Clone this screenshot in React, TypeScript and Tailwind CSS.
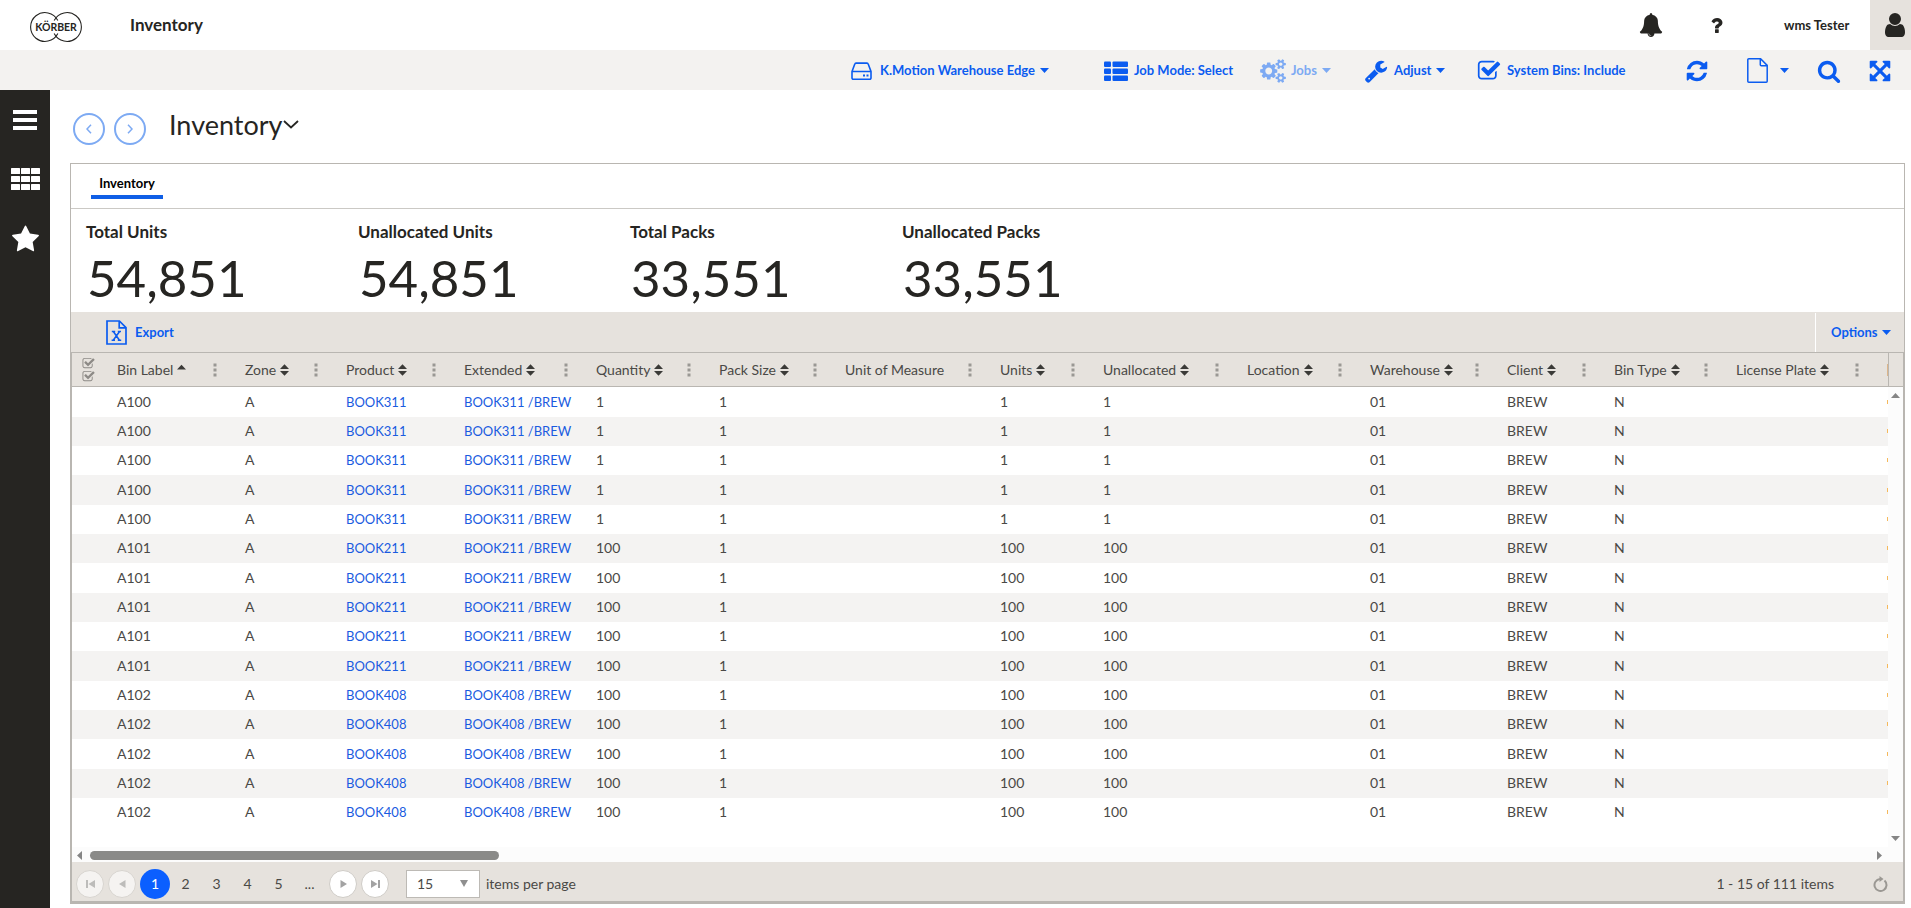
import React from "react";

type IconProps = { d: string; className?: string; box?: string };

function Icon({ d, className = "", box = "0 0 1792 1792" }: IconProps) {
  return (
    <svg viewBox={box} className={className} fill="currentColor" aria-hidden="true">
      <path d={d} />
    </svg>
  );
}

const PATHS = {
  bell: "M912 1696q0-16-16-16-59 0-101.5-42.5t-42.5-101.5q0-16-16-16t-16 16q0 73 51.5 124.5t124.5 51.5q16 0 16-16zm816-288q0 52-38 90t-90 38h-448q0 106-75 181t-181 75-181-75-75-181h-448q-52 0-90-38t-38-90q50-42 91-88t85-119.5 74.5-158.5 50-206 19.5-260q0-152 117-282.5t307-158.5q-8-19-8-39 0-40 28-68t68-28 68 28 28 68q0 20-8 39 190 28 307 158.5t117 282.5q0 139 19.5 260t50 206 74.5 158.5 85 119.5 91 88z",
  question:
    "M1088 1256v240q0 16-12 28t-28 12h-240q-16 0-28-12t-12-28v-240q0-16 12-28t28-12h240q16 0 28 12t12 28zm316-600q0 54-15.5 101t-35 76.5-55 59.5-57.5 43.5-61 35.5q-41 23-68.5 65t-27.5 67q0 17-12 32.5t-28 15.5h-240q-15 0-25.5-18.5t-10.5-37.5v-45q0-83 65-156.5t143-108.5q59-27 84-56t25-76q0-42-46.5-74t-107.5-32q-65 0-108 29-35 25-107 115-13 16-31 16-12 0-25-8l-164-125q-13-10-15.5-25t5.5-28q160-266 464-266 80 0 161 31t146 83 106 127.5 41 158.5z",
  user: "M1536 1399q0 109-62.5 187t-150.5 78h-854q-88 0-150.5-78t-62.5-187q0-85 8.5-160.5t31.5-152 58.5-131 94-89 134.5-34.5q131 128 313 128t313-128q76 0 134.5 34.5t94 89 58.5 131 31.5 152 8.5 160.5zm-256-887q0 159-112.5 271.5t-271.5 112.5-271.5-112.5-112.5-271.5 112.5-271.5 271.5-112.5 271.5 112.5 112.5 271.5z",
  refresh:
    "M1639 1056q0 5-1 7-64 268-268 434.5t-478 166.5q-146 0-282.5-55t-243.5-157l-129 129q-19 19-45 19t-45-19-19-45v-448q0-26 19-45t45-19h448q26 0 45 19t19 45-19 45l-137 137q71 66 161 102t187 36q134 0 250-65t186-179q11-17 53-117 8-23 30-23h192q13 0 22.5 9.5t9.5 22.5zm25-800v448q0 26-19 45t-45 19h-448q-26 0-45-19t-19-45 19-45l138-138q-148-137-349-137-134 0-250 65t-186 179q-11 17-53 117-8 23-30 23h-199q-13 0-22.5-9.5t-9.5-22.5v-7q65-268 270-434.5t480-166.5q146 0 284 55.5t245 156.5l130-129q19-19 45-19t45 19 19 45z",
  check:
    "M1472 930v318q0 119-84.5 203.5t-203.5 84.5h-832q-119 0-203.5-84.5t-84.5-203.5v-832q0-119 84.5-203.5t203.5-84.5h832q63 0 117 25 15 7 18 23 3 17-9 29l-49 49q-10 10-23 10-3 0-9-2-23-6-45-6h-832q-66 0-113 47t-47 113v832q0 66 47 113t113 47h832q66 0 113-47t47-113v-254q0-13 9-22l64-64q10-10 23-10 6 0 12 3 20 8 20 29zm231-489l-814 814q-24 24-57 24t-57-24l-430-430q-24-24-24-57t24-57l110-110q24-24 57-24t57 24l263 263 647-647q24-24 57-24t57 24l110 110q24 24 24 57t-24 57z",
  cogs: "M896 896q0-106-75-181t-181-75-181 75-75 181 75 181 181 75 181-75 75-181zm768 512q0-52-38-90t-90-38-90 38-38 90q0 53 37.5 90.5t90.5 37.5 90.5-37.5 37.5-90.5zm0-1024q0-52-38-90t-90-38-90 38-38 90q0 53 37.5 90.5t90.5 37.5 90.5-37.5 37.5-90.5zm-384 421v185q0 10-7 19.5t-16 10.5l-155 24q-11 35-32 76 34 48 90 115 7 11 7 20 0 12-7 19-23 30-82.5 89.5t-78.5 59.5q-11 0-21-7l-115-90q-37 19-77 31-11 108-23 155-7 24-30 24h-186q-11 0-20-7.5t-10-17.5l-23-153q-34-10-75-31l-118 89q-7 7-20 7-11 0-21-8-144-133-144-160 0-9 7-19 10-14 41-53t47-61q-23-44-35-82l-152-24q-10-1-17-9.5t-7-19.5v-185q0-10 7-19.5t16-10.5l155-24q11-35 32-76-34-48-90-115-7-11-7-20 0-12 7-20 22-30 82-89t79-59q11 0 21 7l115 90q34-18 77-32 11-108 23-154 7-24 30-24h186q11 0 20 7.5t10 17.5l23 153q34 10 75 31l118-89q8-7 20-7 11 0 21 8 144 133 144 160 0 8-7 19-12 16-42 54t-45 60q23 48 34 82l152 23q10 2 17 10.5t7 19.5zm640 533v140q0 16-149 31-12 27-30 52 51 113 51 138 0 4-4 7-122 71-124 71-8 0-46-47t-52-68q-20 2-30 2t-30-2q-14 21-52 68t-46 47q-2 0-124-71-4-3-4-7 0-25 51-138-18-25-30-52-149-15-149-31v-140q0-16 149-31 13-29 30-52-51-113-51-138 0-4 4-7 4-2 35-20t59-34 30-16q8 0 46 46.5t52 67.5q20-2 30-2t30 2q51-71 92-112l6-2q4 0 124 70 4 3 4 7 0 25-51 138 17 23 30 52 149 15 149 31zm0-1024v140q0 16-149 31-12 27-30 52 51 113 51 138 0 4-4 7-122 71-124 71-8 0-46-47t-52-68q-20 2-30 2t-30-2q-14 21-52 68t-46 47q-2 0-124-71-4-3-4-7 0-25 51-138-18-25-30-52-149-15-149-31v-140q0-16 149-31 13-29 30-52-51-113-51-138 0-4 4-7 4-2 35-20t59-34 30-16q8 0 46 46.5t52 67.5q20-2 30-2t30 2q51-71 92-112l6-2q4 0 124 70 4 3 4 7 0 25-51 138 17 23 30 52 149 15 149 31z",
  wrench:
    "M448 1472q0-26-19-45t-45-19-45 19-19 45 19 45 45 19 45-19 19-45zm644-420l-682 682q-37 37-90 37-52 0-91-37l-106-108q-38-36-38-90 0-53 38-91l681-681q39 98 114.5 173.5t173.5 114.5zm634-435q0 39-23 106-47 134-164.5 217.5t-258.5 83.5q-185 0-316.5-131.5t-131.5-316.5 131.5-316.5 316.5-131.5q58 0 121.5 16.5t107.5 46.5q16 11 16 28t-16 28l-293 169v224l193 107q5-3 79-48.5t135.5-81 70.5-35.5q15 0 23.5 10t8.5 25z",
  search:
    "M1216 832q0-185-131.5-316.5t-316.5-131.5-316.5 131.5-131.5 316.5 131.5 316.5 316.5 131.5 316.5-131.5 131.5-316.5zm512 832q0 52-38 90t-90 38q-54 0-90-38l-343-342q-179 124-399 124-143 0-273.5-55.5t-225-150-150-225-55.5-273.5 55.5-273.5 150-225 225-150 273.5-55.5 273.5 55.5 225 150 150 225 55.5 273.5q0 220-124 399l343 343q37 37 37 90z",
  expand:
    "M1411 541l-355 355 355 355 144-144q29-31 70-14 39 17 39 59v448q0 26-19 45t-45 19h-448q-42 0-59-40-17-39 14-69l144-144-355-355-355 355 144 144q31 30 14 69-17 40-59 40h-448q-26 0-45-19t-19-45v-448q0-42 40-59 39-17 69 14l144 144 355-355-355-355-144 144q-19 19-45 19-12 0-24-5-40-17-40-59v-448q0-26 19-45t45-19h448q42 0 59 40 17 39-14 69l-144 144 355 355 355-355-144-144q-31-30-14-69 17-40 59-40h448q26 0 45 19t19 45v448q0 42-39 59-13 5-25 5-26 0-45-19z",
  star: "M1728 647q0 22-26 48l-363 354 86 500q1 7 1 20 0 21-10.5 35.5t-30.5 14.5q-19 0-40-12l-449-236-449 236q-22 12-40 12-21 0-31.5-14.5t-10.5-35.5q0-6 2-20l86-500-364-354q-25-27-25-48 0-37 56-46l502-73 225-455q19-41 49-41t49 41l225 455 502 73q56 9 56 46z",
};

function Caret({ className = "" }: { className?: string }) {
  return (
    <svg viewBox="0 0 9 5" className={`h-[5px] w-[9px] ${className}`} fill="currentColor" aria-hidden="true">
      <path d="M0 0h9L4.5 5z" />
    </svg>
  );
}

function Logo() {
  return (
    <svg viewBox="0 0 52 30" className="h-[30px] w-[52px]" fill="none" stroke="#262522" strokeWidth="1.1" role="img" aria-label="Körber">
      <path d="M27.85 8.5A14.4 14.4 0 1 0 27.85 21.5" />
      <path d="M24.15 8.5A14.4 14.4 0 1 1 24.15 21.5" />
      <text x="26" y="18.6" textAnchor="middle" fontFamily="Lato, sans-serif" fontWeight="700" fontSize="10.5" fill="#262522" stroke="none">
        KÖRBER
      </text>
    </svg>
  );
}

function PageFile({ className = "" }: { className?: string }) {
  return (
    <svg viewBox="0 0 21 25" className={className} fill="none" stroke="currentColor" strokeWidth="1.5" aria-hidden="true">
      <path d="M1.5.8H13.6L20.2 7.4V23.2a1 1 0 0 1-1 1H1.8a1 1 0 0 1-1-1V1.8a1 1 0 0 1 1-1zM13.3.8V6.7a1 1 0 0 0 1 1H20.2" />
    </svg>
  );
}

function ExcelFile() {
  return (
    <svg viewBox="0 0 21 25" className="h-[25px] w-[21px]" fill="none" stroke="currentColor" strokeWidth="1.7" aria-hidden="true">
      <path d="M1 1h12.4L20 7.6V24H1zM13.2 1v6.8H20" />
      <path d="M7.3 11.5l6.2 8.7M13.6 11.5L7.2 20.2M5.8 11.4h3.4M11.8 11.4h3.2M5.6 20.3h3.4M11.8 20.3h3.4" strokeWidth="1.5" />
    </svg>
  );
}

const COLUMNS = [
  { label: "Bin Label", width: "w-[128px]", sort: "asc" },
  { label: "Zone", width: "w-[101px]", sort: "both" },
  { label: "Product", width: "w-[118px]", sort: "both" },
  { label: "Extended", width: "w-[132px]", sort: "both" },
  { label: "Quantity", width: "w-[123px]", sort: "both" },
  { label: "Pack Size", width: "w-[126px]", sort: "both" },
  { label: "Unit of Measure", width: "w-[155px]", sort: "none" },
  { label: "Units", width: "w-[103px]", sort: "both" },
  { label: "Unallocated", width: "w-[144px]", sort: "both" },
  { label: "Location", width: "w-[123px]", sort: "both" },
  { label: "Warehouse", width: "w-[137px]", sort: "both" },
  { label: "Client", width: "w-[107px]", sort: "both" },
  { label: "Bin Type", width: "w-[122px]", sort: "both" },
  { label: "License Plate", width: "w-[151px]", sort: "both" },
];

const GROUPS = [
  { bin: "A100", product: "BOOK311", qty: "1" },
  { bin: "A101", product: "BOOK211", qty: "100" },
  { bin: "A102", product: "BOOK408", qty: "100" },
];

const ROWS = GROUPS.flatMap((g) => Array.from({ length: 5 }, () => g));

const TOTALS = [
  { label: "Total Units", value: "54,851" },
  { label: "Unallocated Units", value: "54,851" },
  { label: "Total Packs", value: "33,551" },
  { label: "Unallocated Packs", value: "33,551" },
];

function SortMark({ sort }: { sort: string }) {
  if (sort === "none") return null;
  return (
    <svg viewBox="0 0 9 12" className="h-3 w-[9px] shrink-0" fill="#3b3a37" aria-hidden="true">
      {sort === "asc" ? <path d="M0 5.5h9L4.5 .8z" /> : <path d="M0 5h9L4.5 .2zM0 7h9L4.5 11.8z" />}
    </svg>
  );
}

function Dots() {
  return (
    <svg viewBox="0 0 4 14" className="h-[14px] w-1" fill="#9a9894" aria-hidden="true">
      <rect x="0.5" y="0.5" width="3" height="3" />
      <rect x="0.5" y="5.5" width="3" height="3" />
      <rect x="0.5" y="10.5" width="3" height="3" />
    </svg>
  );
}

function TopBar() {
  return (
    <header className="flex h-[50px] items-center bg-white pl-[30px] text-[#262522]">
      <a href="#home" className="pt-1">
        <Logo />
      </a>
      <span className="ml-12 text-[17px] font-bold">Inventory</span>
      <button aria-label="Notifications" className="ml-auto flex w-[67px] justify-start">
        <Icon d={PATHS.bell} className="h-6 w-6" />
      </button>
      <button aria-label="Help" className="flex w-[78px] justify-start">
        <Icon d={PATHS.question} className="h-[21px] w-[21px]" />
      </button>
      <button className="flex w-[86px] pt-px text-[13px] font-bold">wms Tester</button>
      <button aria-label="Account" className="flex h-full w-[41px] items-center justify-end bg-[#e6e2dd] pr-1">
        <Icon d={PATHS.user} className="h-7 w-6" box="128 0 1536 1792" />
      </button>
    </header>
  );
}

function Toolbar() {
  return (
    <nav className="flex h-10 items-center justify-end bg-[#f3f2f0] pt-px text-[13px] font-bold text-[#0b5cf0]">
      <button className="flex w-[253px] items-center">
        <svg viewBox="0 0 21 18" className="mr-2 h-[18px] w-[21px]" fill="none" stroke="currentColor" strokeWidth="1.6" aria-hidden="true">
          <path d="M1 9.5L3.8 2a1.3 1.3 0 0 1 1.2-.9h11a1.3 1.3 0 0 1 1.2.9L20 9.5V16a1.2 1.2 0 0 1-1.2 1.2H2.2A1.2 1.2 0 0 1 1 16zM1.2 9.5H19.8" />
          <path d="M12 13.4h2M15.5 13.4h2" strokeWidth="2" />
        </svg>
        K.Motion Warehouse Edge
        <Caret className="ml-[5px]" />
      </button>
      <button className="flex w-[156px] items-center">
        <svg viewBox="0 0 24 20" className="mr-[6px] h-5 w-6" fill="currentColor" aria-hidden="true">
          {[0, 7, 14].map((y) => (
            <g key={y}>
              <rect x="0" y={y + 0.5} width="7" height="5.5" rx="1" />
              <rect x="8.5" y={y + 0.5} width="15.5" height="5.5" rx="1" />
            </g>
          ))}
        </svg>
        Job Mode: Select
      </button>
      <button disabled className="flex w-[104px] items-center text-[#7daaf3]">
        <Icon d={PATHS.cogs} className="mr-[5px] h-6 w-[26px]" box="0 0 1920 1792" />
        Jobs
        <Caret className="ml-[5px]" />
      </button>
      <button className="flex w-[113px] items-center">
        <Icon d={PATHS.wrench} className="mr-[6px] h-6 w-6" />
        Adjust
        <Caret className="ml-[5px]" />
      </button>
      <button className="flex w-[208px] items-center">
        <Icon d={PATHS.check} className="mr-[6px] h-6 w-6" />
        System Bins: Include
      </button>
      <button aria-label="Refresh" className="flex w-[62px] items-center">
        <Icon d={PATHS.refresh} className="h-6 w-6" />
      </button>
      <button aria-label="New page" className="flex w-[70px] items-center">
        <PageFile className="mr-3 h-[25px] w-[21px]" />
        <Caret />
      </button>
      <button aria-label="Search" className="flex w-[51px] items-center">
        <Icon d={PATHS.search} className="h-6 w-6" />
      </button>
      <button aria-label="Full screen" className="flex w-[43px] items-center">
        <Icon d={PATHS.expand} className="h-6 w-6" />
      </button>
    </nav>
  );
}

function Sidebar() {
  return (
    <aside className="flex w-[50px] shrink-0 flex-col items-center bg-[#262522] pt-5 text-white">
      <button aria-label="Menu">
        <svg viewBox="0 0 24 20" className="h-5 w-6" fill="currentColor">
          <path d="M0 0h24v4H0zM0 8h24v4H0zM0 16h24v4H0z" />
        </svg>
      </button>
      <button aria-label="Applications" className="mt-[38px]">
        <svg viewBox="0 0 29 22" className="h-[22px] w-[29px]" fill="currentColor">
          {[0, 8, 16].map((y) =>
            [0, 10, 20].map((x) => <rect key={`${x}-${y}`} x={x} y={y} width="9" height="6" rx="0.5" />),
          )}
        </svg>
      </button>
      <button aria-label="Favourites" className="mt-[35px]">
        <Icon d={PATHS.star} className="h-[29px] w-[29px]" />
      </button>
    </aside>
  );
}

function HeaderTick() {
  return <Icon d={PATHS.check} className="h-[13px] w-[13px] text-[#8d8a86]" />;
}

function Grid() {
  return (
    <div className="flex">
      <div className="min-w-0 flex-1 overflow-hidden">
        <table className="w-[1830px] table-fixed border-collapse text-left text-[14px] leading-5 text-[#4a4946]">
          <thead className="bg-[#e6e2dd]">
            <tr className="h-[34px] border-y border-[#b9b6b1]">
              <th className="w-[33px] p-0">
                <button aria-label="Select all rows" className="flex w-full flex-col items-center">
                  <HeaderTick />
                  <HeaderTick />
                </button>
              </th>
              {COLUMNS.map((c) => (
                <th key={c.label} className={`${c.width} py-0 pr-4 pl-3 font-normal`}>
                  <div className="flex items-center justify-between">
                    <button className="flex items-center gap-1 whitespace-nowrap">
                      {c.label}
                      <SortMark sort={c.sort} />
                    </button>
                    <button aria-label={`${c.label} column menu`}>
                      <Dots />
                    </button>
                  </div>
                </th>
              ))}
              <th className="p-0 pl-3">
                <span className="block h-3 w-px bg-[#dcb58a]" />
              </th>
            </tr>
          </thead>
          <tbody>
            {ROWS.map((r, i) => (
              <tr key={i} className="h-[29px] even:bg-[#f4f3f2] nth-[3n+1]:h-[30px] [&>td]:py-0 [&>td]:pr-0 [&>td]:pl-3">
                <td />
                <td>{r.bin}</td>
                <td>A</td>
                <td>
                  <a href="#product" className="text-[13px] text-[#1a5be0]">{r.product}</a>
                </td>
                <td className="whitespace-nowrap">
                  <a href="#extended" className="text-[13px] text-[#1a5be0]">{r.product} /BREW</a>
                </td>
                <td>{r.qty}</td>
                <td>1</td>
                <td />
                <td>{r.qty}</td>
                <td>{r.qty}</td>
                <td />
                <td>01</td>
                <td>BREW</td>
                <td>N</td>
                <td />
                <td>
                  <span className="block h-1 w-px bg-[#f5b95c]" />
                </td>
              </tr>
            ))}
          </tbody>
        </table>
      </div>
      <div className="flex w-[15px] shrink-0 flex-col">
        <div className="h-[35px] border-y border-l border-[#b9b6b1] bg-[#e6e2dd]" />
        <div className="flex flex-1 flex-col items-center bg-[#fcfcfc] pt-[6px] text-[#858585]">
          <Caret className="rotate-180" />
        </div>
      </div>
    </div>
  );
}

const ROUND = "flex h-7 w-7 items-center justify-center rounded-full border border-[#cfccc7] bg-white text-[#a3a3a3]";

function PagerMark({ d }: { d: string }) {
  return (
    <svg viewBox="0 0 9 8" className="h-2 w-[9px]" fill="currentColor" aria-hidden="true">
      <path d={d} />
    </svg>
  );
}

function Pager() {
  return (
    <footer className="flex h-[39px] items-center bg-[#e6e2dd] pt-1 pr-[15px] pl-1 text-[14px] text-[#4a4946]">
      <div className="flex items-center gap-1">
        <button aria-label="First page" disabled className={`${ROUND} opacity-60`}>
          <PagerMark d="M0 0h2v8H0zM9 0v8L2.5 4z" />
        </button>
        <button aria-label="Previous page" disabled className={`${ROUND} opacity-60`}>
          <PagerMark d="M7.5 0v8L1 4z" />
        </button>
        <button className="h-[30px] w-[30px] rounded-full bg-[#0b5fff] text-white">1</button>
      </div>
      {["2", "3", "4", "5", "..."].map((p) => (
        <button key={p} className="w-[31px] text-center">{p}</button>
      ))}
      <div className="ml-1 flex items-center gap-1">
        <button aria-label="Next page" className={ROUND}>
          <PagerMark d="M1.5 0v8L8 4z" />
        </button>
        <button aria-label="Last page" className={ROUND}>
          <PagerMark d="M0 0v8L6.5 4zM7 0h2v8H7z" />
        </button>
      </div>
      <label className="ml-[17px] flex items-center gap-[6px]">
        <span className="relative flex">
          <select defaultValue="15" className="h-7 w-[74px] appearance-none border border-[#bdbab5] bg-white pl-[10px] text-[14px]">
            <option>15</option>
            <option>30</option>
          </select>
          <svg viewBox="0 0 8 7" className="pointer-events-none absolute top-[10px] right-3 h-[7px] w-2" fill="#8f8f8f" aria-hidden="true">
            <path d="M0 0h8L4 7z" />
          </svg>
        </span>
        items per page
      </label>
      <span className="ml-auto">1 - 15 of 111 items</span>
      <button aria-label="Reload" className="ml-[38px]">
        <svg viewBox="0 0 16 16" className="h-4 w-4" fill="none" stroke="#9b9893" strokeWidth="2" aria-hidden="true">
          <path d="M12.5 4.5A6 6 0 1 1 8 3" />
          <path d="M7.5 0l4 3-4 3z" fill="#9b9893" stroke="none" />
        </svg>
      </button>
    </footer>
  );
}

function SideArrow({ className = "" }: { className?: string }) {
  return (
    <svg viewBox="0 0 5 9" className={`h-[9px] w-[5px] ${className}`} fill="#858585" aria-hidden="true">
      <path d="M5 0v9L0 4.5z" />
    </svg>
  );
}

function NavCircle({ label, d }: { label: string; d: string }) {
  return (
    <button aria-label={label} className="flex h-8 w-8 items-center justify-center rounded-full border-2 border-[#7daaf3] text-[#7daaf3]">
      <svg viewBox="0 0 6 10" className="h-[10px] w-[6px]" fill="none" stroke="currentColor" strokeWidth="1.5">
        <path d={d} />
      </svg>
    </button>
  );
}

export default function App() {
  return (
    <div className="flex min-h-screen flex-col bg-white font-['Lato','Noto_Sans',sans-serif] text-[#262522]">
      <TopBar />
      <Toolbar />
      <div className="flex flex-1">
        <Sidebar />
        <main className="flex min-w-0 flex-1 flex-col pr-[6px] pb-1 pl-5">
          <div className="flex h-[73px] items-center pl-[3px]">
            <div className="flex gap-[9px] pt-1">
              <NavCircle label="Back" d="M5 .8L1 5l4 4.2" />
              <NavCircle label="Forward" d="M1 .8L5 5 1 9.2" />
            </div>
            <button className="ml-[23px] flex items-center pb-1 text-[27px] leading-8">
              Inventory
              <svg viewBox="0 0 16 9" className="h-[9px] w-4" fill="none" stroke="currentColor" strokeWidth="1.8" aria-hidden="true">
                <path d="M1 1l7 6.5L15 1" />
              </svg>
            </button>
          </div>
          <section className="flex flex-1 flex-col border border-[#b9b6b1]">
            <div className="flex h-[45px] items-end border-b border-[#cbc9c5] pb-[9px] pl-5">
              <button className="w-[72px] border-b-4 border-[#0f5fe6] pb-[3px] text-center text-[13px] leading-[18px] font-bold text-black">
                Inventory
              </button>
            </div>
            <div className="flex h-[103px] pt-3 pl-[15px]">
              {TOTALS.map((t) => (
                <div key={t.label} className="w-[272px]">
                  <div className="text-[17px] leading-[22px] font-bold">{t.label}</div>
                  <div className="pt-[9px] pl-px text-[51px] leading-[52px]">{t.value}</div>
                </div>
              ))}
            </div>
            <div className="flex h-10 items-center bg-[#e6e2dd] pt-px pl-[35px] text-[13px] font-bold text-[#0b5cf0]">
              <button className="flex items-center gap-2">
                <ExcelFile />
                Export
              </button>
              <button className="ml-auto flex h-full w-[89px] items-center gap-1 border-l border-white pl-[15px]">
                Options
                <Caret />
              </button>
            </div>
            <div className="flex flex-1 flex-col border-r border-b-2 border-l border-[#b9b6b1]">
              <Grid />
              <div className="flex flex-1 justify-end">
                <div className="flex w-[15px] flex-col items-center justify-end bg-[#fcfcfc] pb-[6px] text-[#858585]">
                  <Caret />
                </div>
              </div>
              <div className="flex h-[15px] items-center justify-between bg-[#fcfcfc] pt-px pr-[21px] pl-[5px]">
                <div className="flex flex-1 items-center gap-2">
                  <SideArrow />
                  <div className="h-[9px] w-[409px] rounded-full bg-[#8a8a88]" />
                </div>
                <SideArrow className="rotate-180" />
              </div>
              <Pager />
            </div>
          </section>
        </main>
      </div>
    </div>
  );
}
